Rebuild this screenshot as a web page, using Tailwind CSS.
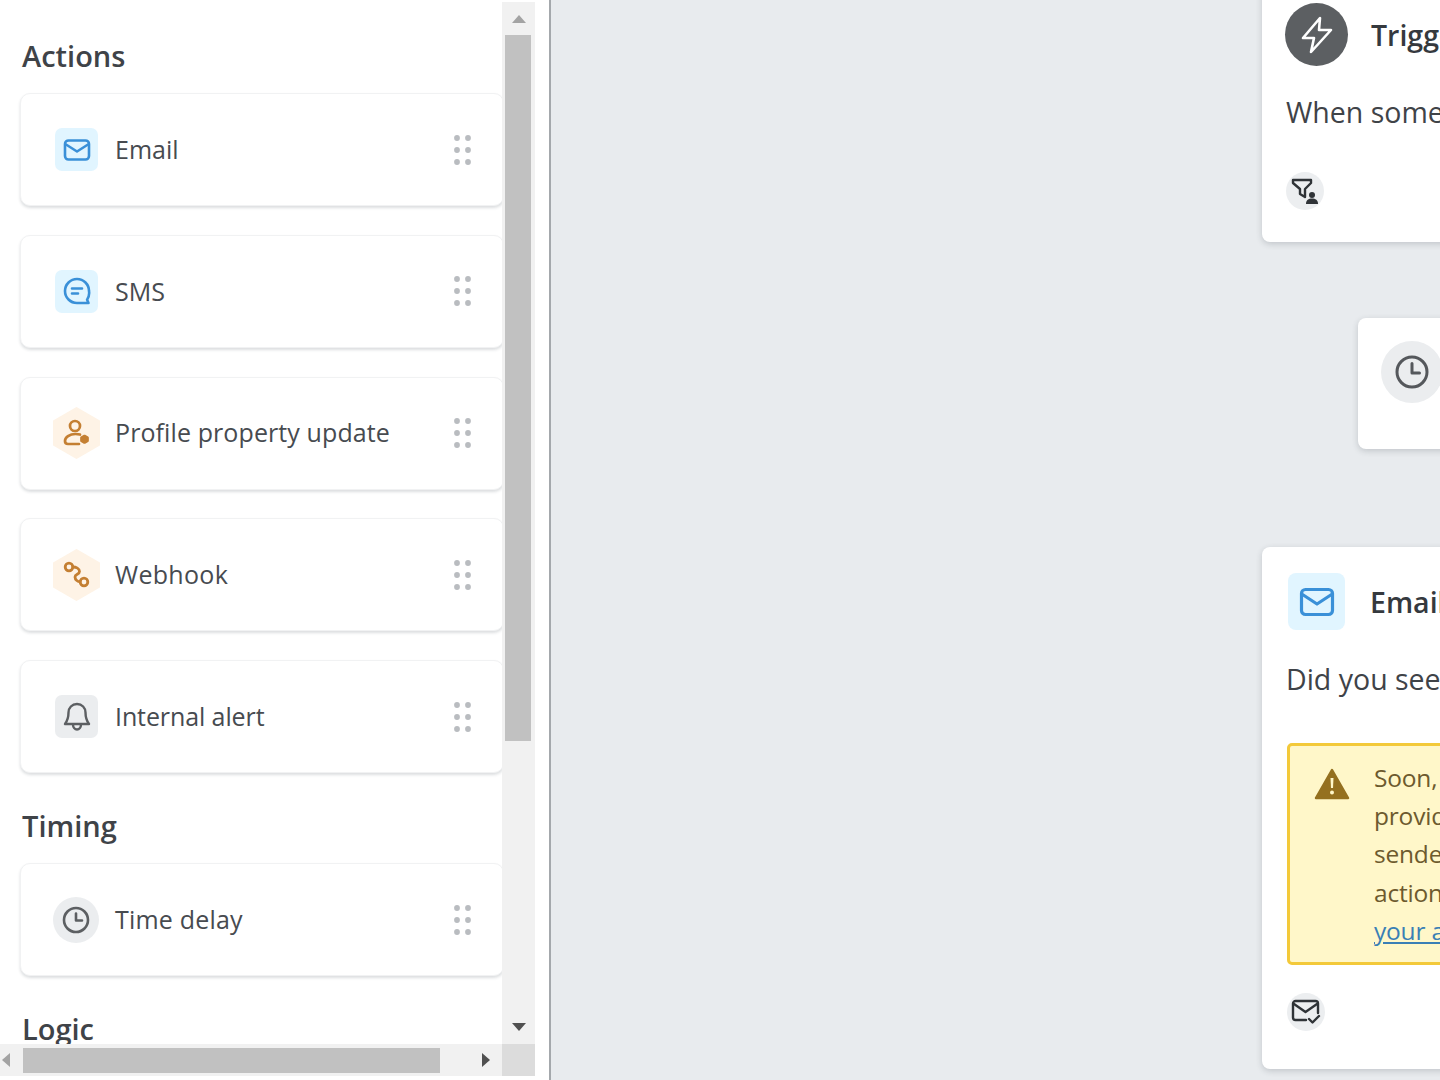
<!DOCTYPE html>
<html lang="en">
<head>
    <meta charset="UTF-8">
    <title>Flow builder</title>
    <script src="https://cdn.jsdelivr.net/npm/@tailwindcss/browser@4"></script>
</head>
<body class="bg-white overflow-hidden font-['Open_Sans',sans-serif]">
    <div class="flex w-[1440px] h-[1080px] overflow-hidden">
        <!-- Sidebar -->
        <aside class="w-[551px] shrink-0 h-full bg-white border-r-[2px] border-[#a4a8ac]">
            <div class="w-[535px] h-[1076px] flex flex-col">
                <div class="flex h-[1044px]">
                    <div class="w-[502px] h-full overflow-hidden pt-[39px]">
                        <h2 class="h-[36px] mb-[18px] pl-[22px] pb-[2px] flex items-center text-[29px] font-semibold text-[#3f4348]">Actions</h2>
                        <div class="flex flex-col gap-[28.75px]">
                            <div class="ml-[20px] w-[484px] h-[113px] shrink-0 flex items-center bg-white rounded-[10px] border border-[#f1f2f3] shadow-[0_2px_3px_rgba(40,50,60,0.16)] pl-[34px]">
                                <div class="w-[43px] h-[43px] flex items-center justify-center rounded-[7px] bg-[#e1f5ff]">
                                    <svg width="28" height="28" viewBox="0 0 28 28" fill="none" stroke="#3a90d8" stroke-width="2.6" stroke-linejoin="round" stroke-linecap="round"><rect x="2" y="4.5" width="24" height="19" rx="3.5"/><path d="M3 8.5l11 7 11-7"/></svg>
                                </div>
                                <span class="ml-[17px] text-[25px] text-[#474b50]">Email</span>
                                <svg class="ml-auto mr-[31px]" width="19" height="30" viewBox="0 0 19 30" fill="#b9bcc0"><circle cx="4" cy="3" r="2.900"/><circle cx="15" cy="3" r="2.900"/><circle cx="4" cy="15" r="2.900"/><circle cx="15" cy="15" r="2.900"/><circle cx="4" cy="27" r="2.900"/><circle cx="15" cy="27" r="2.900"/></svg>
                            </div>
                            <div class="ml-[20px] w-[484px] h-[113px] shrink-0 flex items-center bg-white rounded-[10px] border border-[#f1f2f3] shadow-[0_2px_3px_rgba(40,50,60,0.16)] pl-[34px]">
                                <div class="w-[43px] h-[43px] flex items-center justify-center rounded-[7px] bg-[#e1f5ff]">
                                    <svg width="28" height="28" viewBox="0 0 28 28" fill="none" stroke="#3a90d8" stroke-width="2.6" stroke-linecap="round" stroke-linejoin="round"><path d="M14 2C7.4 2 2 7.3 2 14s5.400 12 12 12h11.500l-1.400-3.300A12 12 0 0 0 26 14C26 7.300 20.600 2 14 2z"/><path d="M9 11.500h10M9 16.500h6"/></svg>
                                </div>
                                <span class="ml-[17px] text-[25px] text-[#474b50]">SMS</span>
                                <svg class="ml-auto mr-[31px]" width="19" height="30" viewBox="0 0 19 30" fill="#b9bcc0"><circle cx="4" cy="3" r="2.900"/><circle cx="15" cy="3" r="2.900"/><circle cx="4" cy="15" r="2.900"/><circle cx="15" cy="15" r="2.900"/><circle cx="4" cy="27" r="2.900"/><circle cx="15" cy="27" r="2.900"/></svg>
                            </div>
                            <div class="ml-[20px] w-[484px] h-[113px] shrink-0 flex items-center bg-white rounded-[10px] border border-[#f1f2f3] shadow-[0_2px_3px_rgba(40,50,60,0.16)] pl-[32px]">
                                <svg width="47" height="52" viewBox="0 0 47 52"><path d="M23.500 1L46 14v24L23.500 51 1 38V14z" fill="#fef3e6" stroke="#fef3e6" stroke-width="2" stroke-linejoin="round"/><g fill="none" stroke="#c47f32" stroke-width="2.700" stroke-linecap="round" stroke-linejoin="round"><circle cx="22" cy="19" r="5"/><path d="M27 27.500c-1.500-.5-3-.5-4.500-.5-6 0-10.500 3.500-10.500 7 0 1.800 1 3 3 3h11"/><path d="M31.500 29l3 1.700v3.100l-3 1.700-3-1.700v-3.100z" fill="#c47f32"/></g></svg>
                                <span class="ml-[15px] text-[25px] text-[#474b50] tracking-[0.1px]">Profile property update</span>
                                <svg class="ml-auto mr-[31px]" width="19" height="30" viewBox="0 0 19 30" fill="#b9bcc0"><circle cx="4" cy="3" r="2.900"/><circle cx="15" cy="3" r="2.900"/><circle cx="4" cy="15" r="2.900"/><circle cx="15" cy="15" r="2.900"/><circle cx="4" cy="27" r="2.900"/><circle cx="15" cy="27" r="2.900"/></svg>
                            </div>
                            <div class="ml-[20px] w-[484px] h-[113px] shrink-0 flex items-center bg-white rounded-[10px] border border-[#f1f2f3] shadow-[0_2px_3px_rgba(40,50,60,0.16)] pl-[32px]">
                                <svg width="47" height="52" viewBox="0 0 47 52"><path d="M23.500 1L46 14v24L23.500 51 1 38V14z" fill="#fef3e6" stroke="#fef3e6" stroke-width="2" stroke-linejoin="round"/><g fill="none" stroke="#c47f32" stroke-width="2.800" stroke-linecap="round"><circle cx="16" cy="18" r="3.800"/><circle cx="31" cy="33" r="3.800"/><path d="M20 18c3 0 6.500 1.500 6.500 4.500S22 25 22 28s3 4.700 5 4.700"/></g></svg>
                                <span class="ml-[15px] text-[25px] text-[#474b50] tracking-[0.3px]">Webhook</span>
                                <svg class="ml-auto mr-[31px]" width="19" height="30" viewBox="0 0 19 30" fill="#b9bcc0"><circle cx="4" cy="3" r="2.900"/><circle cx="15" cy="3" r="2.900"/><circle cx="4" cy="15" r="2.900"/><circle cx="15" cy="15" r="2.900"/><circle cx="4" cy="27" r="2.900"/><circle cx="15" cy="27" r="2.900"/></svg>
                            </div>
                            <div class="ml-[20px] w-[484px] h-[113px] shrink-0 flex items-center bg-white rounded-[10px] border border-[#f1f2f3] shadow-[0_2px_3px_rgba(40,50,60,0.16)] pl-[34px]">
                                <div class="w-[43px] h-[43px] flex items-center justify-center rounded-[7px] bg-[#ebedef]">
                                    <svg width="28" height="30" viewBox="0 0 28 30" fill="none" stroke="#5c5f62" stroke-width="2.400" stroke-linecap="round" stroke-linejoin="round"><path d="M14 2c-5 0-8.500 3.800-8.500 8.500 0 6-1.300 8.500-3.500 11.500h24c-2.200-3-3.500-5.500-3.500-11.500C22.500 5.800 19 2 14 2z"/><path d="M10 22.500c0 2.800 1.800 5 4 5s4-2.200 4-5"/></svg>
                                </div>
                                <span class="ml-[17px] text-[25px] text-[#474b50] tracking-[-0.1px]">Internal alert</span>
                                <svg class="ml-auto mr-[31px]" width="19" height="30" viewBox="0 0 19 30" fill="#b9bcc0"><circle cx="4" cy="3" r="2.900"/><circle cx="15" cy="3" r="2.900"/><circle cx="4" cy="15" r="2.900"/><circle cx="15" cy="15" r="2.900"/><circle cx="4" cy="27" r="2.900"/><circle cx="15" cy="27" r="2.900"/></svg>
                            </div>
                        </div>
                        <h2 class="h-[36px] mt-[36px] mb-[18px] pl-[22px] pb-[2px] flex items-center text-[29px] font-semibold text-[#3f4348]">Timing</h2>
                        <div class="ml-[20px] w-[484px] h-[113px] flex items-center bg-white rounded-[10px] border border-[#f1f2f3] shadow-[0_2px_3px_rgba(40,50,60,0.16)] pl-[32px]">
                            <div class="w-[46px] h-[46px] flex items-center justify-center rounded-full bg-[#ebedef]">
                                <svg width="28" height="28" viewBox="0 0 28 28" fill="none" stroke="#5c5f62" stroke-width="2.600" stroke-linecap="round" stroke-linejoin="round"><circle cx="14" cy="14" r="12"/><path d="M14 7.500V14.500h6"/></svg>
                            </div>
                            <span class="ml-[16px] text-[25px] text-[#474b50] tracking-[0.2px]">Time delay</span>
                            <svg class="ml-auto mr-[31px]" width="19" height="30" viewBox="0 0 19 30" fill="#b9bcc0"><circle cx="4" cy="3" r="2.900"/><circle cx="15" cy="3" r="2.900"/><circle cx="4" cy="15" r="2.900"/><circle cx="15" cy="15" r="2.900"/><circle cx="4" cy="27" r="2.900"/><circle cx="15" cy="27" r="2.900"/></svg>
                        </div>
                        <h2 class="h-[36px] mt-[36px] pl-[22px] pb-[2px] flex items-center text-[29px] font-semibold text-[#3f4348]">Logic</h2>
                    </div>
                    <!-- Vertical scrollbar -->
                    <div class="w-[33px] h-full pt-[2px]">
                        <div class="h-full flex flex-col bg-[#f1f1f1]">
                            <div class="h-[33px] flex items-center justify-center">
                                <svg width="14" height="8" viewBox="0 0 14 8" fill="#a3a3a3"><path d="M7 0l7 8H0z"/></svg>
                            </div>
                            <div class="h-[706px] ml-[3px] mr-[4px] bg-[#c1c1c1]"></div>
                            <div class="flex-1"></div>
                            <div class="h-[34px] flex items-center justify-center">
                                <svg width="14" height="8" viewBox="0 0 14 8" fill="#505050"><path d="M0 0h14L7 8z"/></svg>
                            </div>
                        </div>
                    </div>
                </div>
                <!-- Horizontal scrollbar -->
                <div class="flex h-[32px]">
                    <div class="w-[502px] h-full flex items-center bg-[#f1f1f1]">
                        <div class="w-[23px] flex pl-[2px]">
                            <svg width="8" height="14" viewBox="0 0 8 14" fill="#a3a3a3"><path d="M8 0v14L0 7z"/></svg>
                        </div>
                        <div class="w-[417px] h-[25px] bg-[#c1c1c1]"></div>
                        <div class="ml-[42px]">
                            <svg class="block" width="8" height="14" viewBox="0 0 8 14" fill="#505050"><path d="M0 0l8 7-8 7z"/></svg>
                        </div>
                    </div>
                    <div class="w-[33px] h-full bg-[#dcdcdc]"></div>
                </div>
            </div>
        </aside>

        <!-- Canvas: nodes of the flow sit at their own coordinates -->
        <main class="relative flex-1 h-full bg-[#e8ebee] overflow-hidden">
            <div class="absolute left-[711px] top-[-40px] w-[420px] h-[282px] bg-white rounded-[8px] shadow-[0_2px_6px_rgba(40,50,60,0.2)]">
                <div class="flex items-center ml-[23px] mt-[43px]">
                    <div class="w-[63px] h-[63px] flex items-center justify-center rounded-full bg-[#5c5f62]">
                        <svg width="34" height="38" viewBox="0 0 34 38" fill="none" stroke="#fff" stroke-width="2.600" stroke-linejoin="round"><path d="M20 2L3 22h11l-3 14 20-22H19z"/></svg>
                    </div>
                    <span class="ml-[23px] mt-[2px] text-[28.5px] font-semibold text-[#35393e]">Trigger</span>
                </div>
                <p class="ml-[24px] mt-[26px] h-[40px] leading-[40px] text-[28.5px] text-[#3f4348] whitespace-nowrap">When someone</p>
                <div class="ml-[24px] mt-[40px] w-[38px] h-[38px] flex items-center justify-center rounded-full bg-[#eceef0]">
                    <svg width="30" height="30" viewBox="0 0 30 30"><path d="M3 4h18v3l-6 6v8l-5-3v-5L3 7z" fill="none" stroke="#2f3337" stroke-width="2.400" stroke-linejoin="round"/><circle cx="22" cy="19" r="3" fill="#2f3337"/><path d="M16 28c0-4 2.500-5.500 6-5.500s6 1.500 6 5.500z" fill="#2f3337"/></svg>
                </div>
            </div>
            <div class="absolute left-[807px] top-[318px] w-[400px] h-[131px] bg-white rounded-[8px] shadow-[0_2px_6px_rgba(40,50,60,0.2)] pl-[23px] pt-[23px]">
                <div class="w-[62px] h-[62px] flex items-center justify-center rounded-full bg-[#ebedef]">
                    <svg width="34" height="34" viewBox="0 0 34 34" fill="none" stroke="#55585c" stroke-width="3" stroke-linecap="round" stroke-linejoin="round"><circle cx="17" cy="17" r="15"/><path d="M17 8.500V18h7.500"/></svg>
                </div>
            </div>
            <div class="absolute left-[711px] top-[547px] w-[420px] h-[522px] bg-white rounded-[8px] shadow-[0_2px_6px_rgba(40,50,60,0.2)]">
                <div class="flex items-center ml-[26px] mt-[26px]">
                    <div class="w-[57px] h-[57px] flex items-center justify-center rounded-[8px] bg-[#e1f5ff]">
                        <svg width="36" height="32" viewBox="0 0 36 32" fill="none" stroke="#3a90d8" stroke-width="3.200" stroke-linejoin="round" stroke-linecap="round"><rect x="2.500" y="3.500" width="31" height="25" rx="4"/><path d="M3.500 8.500L18 18 32.500 8.500"/></svg>
                    </div>
                    <span class="ml-[25px] mt-[2px] text-[28.5px] font-semibold text-[#35393e]">Email</span>
                </div>
                <p class="ml-[24px] mt-[29px] h-[40px] leading-[40px] text-[28.5px] text-[#3f4348] whitespace-nowrap">Did you see</p>
                <div class="flex ml-[25px] mt-[44px] w-[380px] h-[222px] bg-[#fff7c9] border-[3px] border-[#f3c93a] rounded-[5px]">
                    <svg class="ml-[24px] mt-[22px] shrink-0" width="36" height="32" viewBox="0 0 36 32"><path d="M18 2L34 30H2z" fill="#94701f" stroke="#94701f" stroke-width="2.500" stroke-linejoin="round"/><path d="M16.500 10h3l-.5 10h-2z" fill="#fff7c9"/><circle cx="18" cy="24.500" r="2" fill="#fff7c9"/></svg>
                    <div class="ml-[24px] mt-[13px] text-[24.5px] leading-[38.2px] text-[#6d5a2e] whitespace-nowrap tracking-[-0.2px]">
                        <p>Soon, inbox</p>
                        <p>providers</p>
                        <p>senders</p>
                        <p>actions</p>
                        <a href="#" class="text-[#3a7fb5] underline">your account</a>
                    </div>
                </div>
                <div class="ml-[25px] mt-[28px] w-[38px] h-[38px] flex items-center justify-center rounded-full bg-[#eceef0]">
                    <svg width="30" height="28" viewBox="0 0 30 28" fill="none" stroke="#2f3337" stroke-width="2.400" stroke-linejoin="round" stroke-linecap="round"><path d="M15 22H4.500A2.500 2.500 0 0 1 2 19.500v-14A2.500 2.500 0 0 1 4.500 3h20A2.500 2.500 0 0 1 27 5.500V15"/><path d="M3 6l11.500 8L26 6"/><path d="M18 21l3.500 3.500L28 18"/></svg>
                </div>
            </div>
        </main>
    </div>
</body>
</html>
